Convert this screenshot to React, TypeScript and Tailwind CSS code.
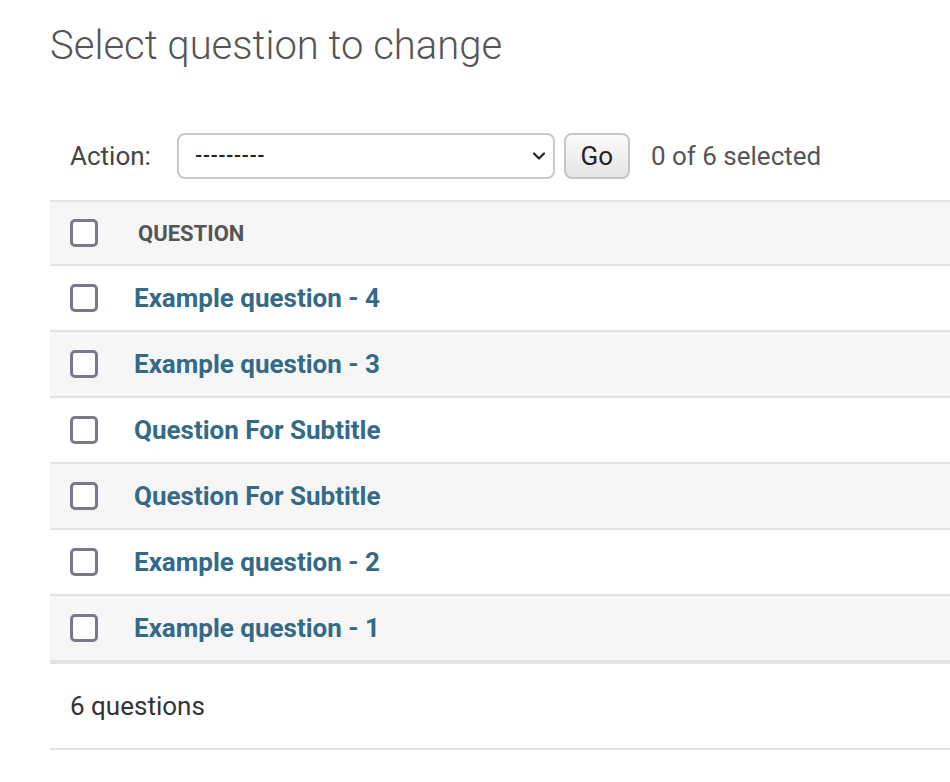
import React from "react";

const rows = [
  "Example question - 4",
  "Example question - 3",
  "Question For Subtitle",
  "Question For Subtitle",
  "Example question - 2",
  "Example question - 1",
];

const Checkbox: React.FC = () => (
  <div className="h-[28px] w-[28px] shrink-0 rounded-[5px] border-[3px] border-[#7b7989] bg-white"></div>
);

const App: React.FC = () => {
  return (
    <div className="min-h-[782px] w-[950px] overflow-hidden bg-white font-['Roboto',sans-serif]">
      <div className="pl-[50px] w-[1000px]">
        {/* Title */}
        <h1 className="pt-[22px] text-[40px] leading-[48px] font-light text-[#555]">
          Select question to change
        </h1>

        {/* Actions bar */}
        <div className="mt-[63px] flex h-[46px] items-center pl-[20px]">
          <label className="text-[26px] text-[#444]">Action:</label>
          <div className="ml-[26px] flex h-[46px] w-[378px] items-center justify-between rounded-[8px] border-2 border-[#c9c9c9] bg-white pl-[16px] pr-[7px]">
            <span className="text-[19px] font-bold tracking-[0.3px] text-[#222]">---------</span>
            <svg width="14" height="10" viewBox="0 0 14 10" fill="none">
              <path d="M2 2.5 L7 7.5 L12 2.5" stroke="#222" strokeWidth="2.2" strokeLinecap="round" strokeLinejoin="round" />
            </svg>
          </div>
          <button className="ml-[9px] flex h-[46px] w-[66px] items-center justify-center rounded-[8px] border-2 border-[#c6c6c6] bg-gradient-to-b from-[#fbfbfb] to-[#e4e4e4] text-[26px] text-[#222]">
            Go
          </button>
          <span className="ml-[21px] text-[26px] text-[#555]">0 of 6 selected</span>
        </div>

        {/* Table */}
        <div className="mt-[21px]">
          <div className="flex h-[66px] items-center border-y-2 border-[#e3e3e3] bg-[#f6f6f6] pl-[20px]">
            <Checkbox />
            <span className="ml-[40px] text-[22px] font-bold text-[#555]">QUESTION</span>
          </div>
          {rows.map((row, i) => (
            <div
              key={i}
              className={`flex h-[66px] items-center border-b-2 border-[#e3e3e3] pl-[20px] ${
                i % 2 === 1 ? "bg-[#f6f6f6]" : "bg-white"
              }`}
            >
              <Checkbox />
              <a className="ml-[36px] text-[26px] font-bold text-[#336a88]">{row}</a>
            </div>
          ))}
        </div>

        {/* Paginator */}
        <div className="flex h-[88px] items-center border-y-2 border-[#e3e3e3] pl-[20px] text-[26px] text-[#333]">
          6 questions
        </div>
      </div>
    </div>
  );
};

export default App;
